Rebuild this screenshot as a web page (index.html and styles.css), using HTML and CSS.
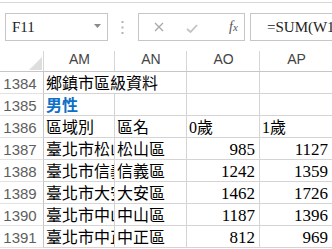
FILE: index.html
```html
<!DOCTYPE html>
<html lang="zh-TW">
<head>
    <meta charset="UTF-8">
    <meta name="viewport" content="width=device-width, initial-scale=1.0">
    <title>Excel 工作表</title>
    <link rel="stylesheet" href="styles.css">
</head>
<body>
    <!-- 功能區下緣 -->
    <div class="ribbon-edge"></div>

    <!-- 資料編輯列 -->
    <div class="formula-bar">
        <div class="name-box">
            <span class="name-text">F11</span>
            <svg class="dropdown" width="7" height="4" viewBox="0 0 7 4"><path d="M0 0h7L3.5 4z" fill="#8a8a8a"/></svg>
        </div>
        <svg class="grip" width="3" height="13" viewBox="0 0 3 13">
            <rect x="0.5" y="0" width="2" height="2" fill="#b3b3b3"/>
            <rect x="0.5" y="5.5" width="2" height="2" fill="#b3b3b3"/>
            <rect x="0.5" y="11" width="2" height="2" fill="#b3b3b3"/>
        </svg>
        <div class="fx-buttons">
            <svg class="btn-cancel" width="10" height="10" viewBox="0 0 10 10"><path d="M1 1l8 8M9 1l-8 8" stroke="#a8a8a8" stroke-width="1.3"/></svg>
            <svg class="btn-enter" width="12" height="9" viewBox="0 0 12 9"><path d="M1 5l3.5 3L11 1" stroke="#c2c2c2" stroke-width="1.8" fill="none"/></svg>
            <span class="fx">f<span class="fx-x">x</span></span>
        </div>
        <div class="formula">=SUM(W1387:W1391)</div>
    </div>

    <!-- 工作表 -->
    <div class="sheet">
        <div class="corner">
            <svg width="13" height="13" viewBox="0 0 13 13"><path d="M13 0v13H0z" fill="#dedede"/></svg>
        </div>
        <div class="col-head">AM</div>
        <div class="col-head">AN</div>
        <div class="col-head">AO</div>
        <div class="col-head">AP</div>

        <div class="row-head">1384</div>
        <div class="cell span-2">鄉鎮市區級資料</div>
        <div class="cell"></div>
        <div class="cell"></div>

        <div class="row-head">1385</div>
        <div class="cell title">男性</div>
        <div class="cell"></div>
        <div class="cell"></div>
        <div class="cell"></div>

        <div class="row-head">1386</div>
        <div class="cell">區域別</div>
        <div class="cell">區名</div>
        <div class="cell">0歲</div>
        <div class="cell">1歲</div>

        <div class="row-head">1387</div>
        <div class="cell">臺北市松山區</div>
        <div class="cell">松山區</div>
        <div class="cell num">985</div>
        <div class="cell num">1127</div>

        <div class="row-head">1388</div>
        <div class="cell">臺北市信義區</div>
        <div class="cell">信義區</div>
        <div class="cell num">1242</div>
        <div class="cell num">1359</div>

        <div class="row-head">1389</div>
        <div class="cell">臺北市大安區</div>
        <div class="cell">大安區</div>
        <div class="cell num">1462</div>
        <div class="cell num">1726</div>

        <div class="row-head">1390</div>
        <div class="cell">臺北市中山區</div>
        <div class="cell">中山區</div>
        <div class="cell num">1187</div>
        <div class="cell num">1396</div>

        <div class="row-head">1391</div>
        <div class="cell">臺北市中正區</div>
        <div class="cell">中正區</div>
        <div class="cell num">812</div>
        <div class="cell num">969</div>
    </div>
</body>
</html>
```

FILE: styles.css
```css
/* 全體 */
* {
    margin: 0;
    padding: 0;
    box-sizing: border-box;
}

body {
    width: 332px;
    height: 249px;
    overflow: hidden;
    background: #ffffff;
    font-family: "Liberation Sans", "Noto Sans CJK TC", sans-serif;
    color: #000000;
}

/* 功能區下緣 */
.ribbon-edge {
    height: 3px;
    border-bottom: 1px solid #d6d6d6;
}

/* 資料編輯列 */
.formula-bar {
    display: flex;
    align-items: center;
    height: 28px;
    margin-top: 10px;
    padding-left: 5px;
    white-space: nowrap;
}

.name-box {
    display: flex;
    align-items: center;
    justify-content: space-between;
    width: 103px;
    height: 28px;
    padding: 0 6px 0 6px;
    border: 1px solid #c6c6c6;
}

.name-text {
    font-family: "Liberation Serif", serif;
    font-size: 15px;
    color: #222222;
}

.dropdown {
    margin-top: -2px;
}

.grip {
    margin: 0 14px 0 13px;
}

.fx-buttons {
    display: flex;
    align-items: center;
    width: 107px;
    height: 28px;
    padding-left: 15px;
    border: 1px solid #c6c6c6;
}

.btn-cancel {
    margin-right: 22px;
}

.btn-enter {
    margin-right: 31px;
    margin-top: 2px;
}

.fx {
    font-family: "Liberation Serif", serif;
    font-style: italic;
    font-size: 14px;
    color: #555555;
}

.fx-x {
    font-size: 11px;
}

.formula {
    flex: 1;
    height: 28px;
    margin-left: 5px;
    padding-left: 16px;
    border: 1px solid #c6c6c6;
    border-right: none;
    font-family: "Liberation Serif", serif;
    font-size: 15px;
    line-height: 26px;
    color: #222222;
    overflow: hidden;
}

/* 工作表格線 */
.sheet {
    display: grid;
    grid-template-columns: 44px 71px 72px 73px 73px;
    grid-template-rows: 25px;
    grid-auto-rows: 22px;
    margin-top: 6px;
    width: 333px;
}

.corner {
    display: flex;
    align-items: flex-end;
    justify-content: flex-end;
    padding: 0 2px 1px 0;
    border-bottom: 1px solid #c6c6c6;
    background: linear-gradient(#d6d6d6, #d6d6d6) no-repeat right bottom / 1px 20px;
}

.col-head {
    font-size: 14px;
    color: #444444;
    text-align: center;
    line-height: 23px;
    padding-top: 1px;
    border-bottom: 1px solid #c6c6c6;
    background: linear-gradient(#d6d6d6, #d6d6d6) no-repeat right bottom / 1px 20px;
}

.row-head {
    font-size: 15px;
    color: #5e5e5e;
    text-align: center;
    padding-right: 3px;
    line-height: 23px;
    border-right: 1px solid #c6c6c6;
    border-bottom: 1px solid #e2e2e2;
}

.cell {
    font-family: "Liberation Serif", "Noto Sans CJK TC", serif;
    font-size: 16px;
    line-height: 21px;
    padding: 1px 2px 0 2px;
    white-space: nowrap;
    overflow: hidden;
    border-right: 1px solid #d4d4d4;
    border-bottom: 1px solid #d4d4d4;
}

.span-2 {
    grid-column: span 2;
}

.title {
    color: #0f6fc6;
    font-weight: bold;
}

.num {
    text-align: right;
    font-size: 17px;
    padding-right: 4px;
}
```
